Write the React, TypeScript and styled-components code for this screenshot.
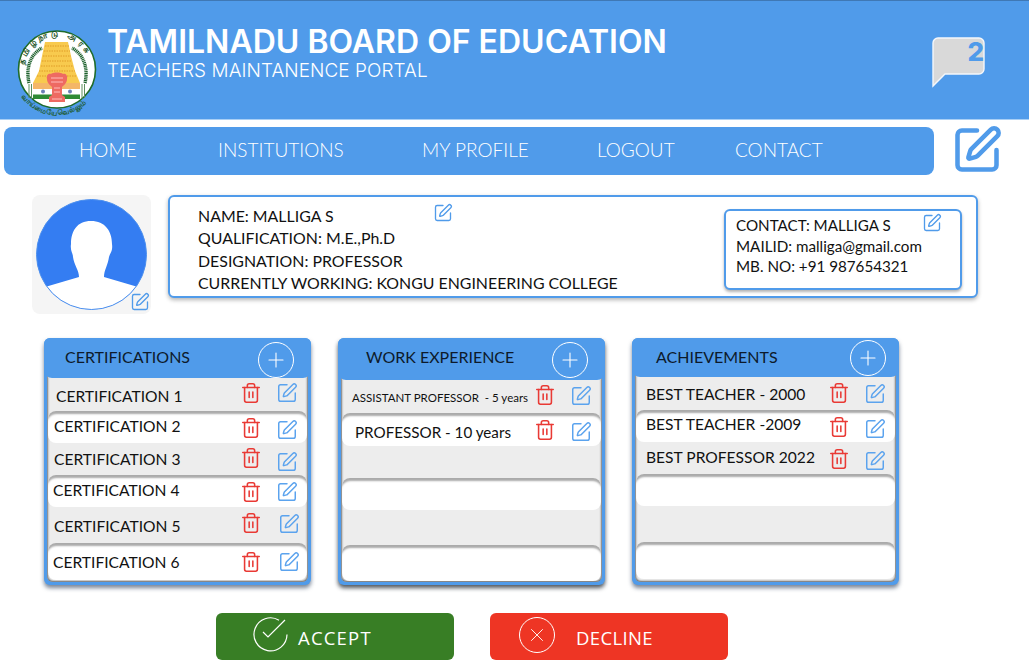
import React from "react";
import styled, { createGlobalStyle } from "styled-components";
import { Plus, SquarePen, Trash2, X } from "lucide-react";

const BLUE = "#509bea";
const DISPLAY = `"Lato", "Noto Sans", sans-serif`;

const Global = createGlobalStyle`
  html, body { margin: 0; padding: 0; background: #fff; }
  body { font-family: ${DISPLAY}; color: #111; overflow: hidden; }
`;
const Page = styled.div`
  width: 1029px; height: 671px; display: flex; flex-direction: column; overflow: hidden;
`;
const Header = styled.header`
  height: 120px; box-sizing: border-box; flex: none; background: ${BLUE};
  border-top: 1px solid #3f78b5; border-bottom: 1px solid #a9cff5;
  display: flex; align-items: flex-start; padding: 0 43px 0 15px;
`;
const LogoBox = styled.div` width: 84px; height: 92px; margin-top: 27px; flex: none; `;
const Titles = styled.div` margin-left: 9px; margin-top: 22px; color: #fff; font-family: Inter, sans-serif; flex: 1; `;
const Title = styled.h1`
  margin: 0 0 0 -1px; font-size: 32px; line-height: 38px; font-weight: 600; white-space: nowrap;
`;
const Subtitle = styled.p`
  margin: 0 0 0 -1px; font-size: 18.9px; line-height: 20px; font-weight: 300; letter-spacing: 0.1px; white-space: nowrap;
`;
const Bubble = styled.div` position: relative; width: 54px; height: 51px; margin-top: 36px; flex: none; `;
const BubbleCount = styled.span`
  position: absolute; right: 2px; top: 0; font: 800 26px/30px Inter, sans-serif; color: ${BLUE};
`;
const NavRow = styled.div` display: flex; align-items: flex-start; height: 48px; flex: none; margin: 7px 0 0 4px; `;
const Nav = styled.nav`
  width: 930px; height: 48px; border-radius: 8px; background: ${BLUE}; box-sizing: border-box; padding: 0 0 3px 75px;
  display: grid; grid-template-columns: 139px 204px 175px 138px 120px; align-items: center;
`;
const NavItem = styled.a` color: #fff; font-size: 19px; font-weight: 300; white-space: nowrap; `;
const BigEdit = styled(SquarePen)` margin: -3px 0 0 17px; color: ${BLUE}; flex: none; `;
const ProfileRow = styled.section` display: flex; align-items: flex-start; margin: 20px 0 0 32px; `;
const AvatarBox = styled.div`
  position: relative; width: 119px; height: 119px; background: #f5f5f5; border-radius: 8px; flex: none;
  display: flex; align-items: center; justify-content: center;
`;
const Corner = styled(SquarePen)<{ $r: number; $t: number }>`
  position: absolute; right: ${(p) => p.$r}px; top: ${(p) => p.$t}px; color: ${BLUE};
`;
const InfoCard = styled.div`
  position: relative; margin-left: 17px; width: 810px; height: 103px; box-sizing: border-box;
  border: 2px solid ${BLUE}; border-radius: 6px; background: #fff; box-shadow: 0 2px 4px rgba(0,0,0,.3);
  display: flex; align-items: flex-start; padding: 8px 14px 0 28px;
`;
const InfoText = styled.div` font-size: 15.9px; line-height: 22.4px; white-space: nowrap; flex: 1; `;
const ContactCard = styled.div`
  position: relative; width: 238px; height: 81px; box-sizing: border-box; margin-top: 4px;
  border: 2px solid ${BLUE}; border-radius: 6px; background: #fff; box-shadow: 0 2px 3px rgba(0,0,0,.3);
  padding: 4px 0 0 10px; font-size: 15.2px; line-height: 20.5px; white-space: nowrap;
`;
const Panels = styled.section` display: flex; gap: 27.5px; margin: 24px 0 0 44px; `;
const Panel = styled.div<{ $dark?: boolean }>`
  width: 266.5px; height: 247px; box-sizing: border-box; background: ${BLUE}; border-radius: 6px;
  box-shadow: 0 3px 4px ${(p) => (p.$dark ? "rgba(20,30,40,.75)" : "rgba(30,50,80,.6)")};
  display: flex; flex-direction: column; padding: 0 3px 3px; overflow: hidden;
`;
const PanelHead = styled.div<{ $h: number; $pl: number; $gap: number }>`
  height: ${(p) => p.$h}px; flex: none; margin: 0 -3px; background: ${BLUE}; display: flex; align-items: flex-start;
  padding: ${(p) => p.$gap}px 0 0 ${(p) => p.$pl}px; box-sizing: border-box; position: relative; z-index: 1;
  border-radius: 0 0 8px 8px; font-size: 16px; line-height: 28px; white-space: nowrap;
`;
const PanelName = styled.span` flex: 1; color: #0d1a2b; `;
const AddCircle = styled.span<{ $mr: number; $mt: number }>`
  width: 34px; height: 34px; border: 1px solid #fff; border-radius: 50%; display: flex; align-items: center;
  justify-content: center; margin: ${(p) => p.$mt}px ${(p) => p.$mr}px 0 0; color: #fff; flex: none;
`;
const PanelBody = styled.div`
  flex: 1; background: linear-gradient(#fff 8px, #ededed 8px); border-radius: 0 0 6px 6px; overflow: hidden;
  margin-top: -8px; padding-top: 8px;
  box-shadow: inset 2px 0 2px -1px #777, inset -2px 0 2px -1px #777, inset 0 -2px 2px -1px #666;
`;
const Row = styled.div<{ $h: number; $white?: boolean; $pl: number }>`
  height: ${(p) => p.$h}px; box-sizing: border-box; display: flex; align-items: center; padding: 0 10px 0 ${(p) => p.$pl}px;
  white-space: nowrap;
  ${(p) => p.$white ? `background: #fff; border-radius: 8px; margin: 0 1px; padding-right: 9px; box-shadow: inset 0 4px 2px -1px #aaa;` : ""}
`;
const RowText = styled.span<{ $s?: number; $dy?: number }>`
  flex: 1; font-size: ${(p) => p.$s ?? 15.6}px; margin-top: ${(p) => p.$dy ?? 0}px;
`;
const Small = styled.span` font-size: 11.5px; `;
const Trash = styled(Trash2)<{ $dy: number }>`
  color: #e93a35; flex: none; margin-top: ${(p) => p.$dy}px;
`;
const RowEdit = styled(SquarePen)<{ $dy: number; $shift: number }>`
  color: #5ba3ee; flex: none; margin: ${(p) => p.$dy}px ${(p) => -p.$shift}px 0 ${(p) => 14 + p.$shift}px;
`;
const Actions = styled.section` display: flex; gap: 36px; margin: 28px 0 0 216px; `;
const ActionBtn = styled.button<{ $bg: string; $pl: number; $gap: number }>`
  width: 238px; height: 47px; border: 0; border-radius: 6px; background: ${(p) => p.$bg}; color: #fff; display: flex;
  align-items: center; padding: 0 0 0 ${(p) => p.$pl}px; gap: ${(p) => p.$gap}px; font: 400 18.5px "Open Sans", sans-serif;
`;
const RingIcon = styled.svg` flex: none; margin-top: -4px; `;
const BtnLabel = styled.span<{ $ls: number }>` margin-top: 2px; letter-spacing: ${(p) => p.$ls}px; `;
const Ring = styled.span`
  width: 34px; height: 34px; border: 1.2px solid #fff; border-radius: 50%; display: flex;
  align-items: center; justify-content: center; flex: none; margin-top: -4px;
`;

const Logo = () => (
  <svg width="84" height="92" viewBox="0 0 84 92" aria-hidden="true">
    <defs>
      <path id="topArc" d="M8.5 42 A33.5 33.5 0 0 1 75.5 42" />
      <path id="botArc" d="M5 66 A43 43 0 0 0 79 66" />
    </defs>
    <circle cx="42" cy="41.5" r="38.5" fill="#fff" stroke="#1f6b2a" strokeWidth="1.6" />
    <text fontSize="8" fill="#174f22" fontWeight="700" fontFamily="'Noto Sans', sans-serif" letterSpacing="3.4">
      <textPath href="#topArc" startOffset="5">தமிழ்நாடு அரசு</textPath>
    </text>
    <g fill="none" stroke="#1b5f2a" strokeWidth="3.4" strokeDasharray="1.2 .6">
      <path d="M14 55 C11 42 14 27 27 20" />
      <path d="M70 55 C73 42 70 27 57 20" />
    </g>
    <path d="M18 55 L24 43 L27 28 L30 14 L53 14 L56 28 L60 43 L65 55 Z" fill="#f8ca4e" />
    <path d="M30 18 H54 M29 23 H55 M28 28 H56 M27 33 H57 M26 38 H58 M24 43 H60 M22 48 H62" stroke="#e09c27" strokeWidth="1" strokeDasharray="1.5 1" />
    <rect x="18" y="55" width="47" height="6" fill="#f4b668" />
    <rect x="18" y="61" width="47" height="5.5" fill="#fff" />
    <rect x="18" y="66.5" width="47" height="4.5" fill="#2f8a34" />
    <path d="M14 56 V70 M16.5 56 V71 M67 56 V71 M69.5 56 V70" stroke="#5c8f5e" strokeWidth="1" />
    <circle cx="28" cy="63.5" r="2" fill="#6b7fb5" />
    <circle cx="55" cy="63.5" r="2" fill="#6b7fb5" />
    <path d="M32 51 C31 47 34 45 36 46 C38 44 46 44 48 46 C50 45 53 47 52 51 C52 55 49 57 47 59 L47 67 L50 69 L50 74 L34 74 L34 69 L37 67 L37 59 C35 57 32 55 32 51 Z" fill="#ee6a62" />
    <path d="M36 50 H48 M36 54 H48 M39 60 H45 M39 64 H45 M37 71 H47" stroke="#fbb" strokeWidth="1" />
    <text fontSize="7" fill="#1d5a2a" fontWeight="700" fontFamily="'Noto Sans', sans-serif">
      <textPath href="#botArc" startOffset="3">வாய்மையே வெல்லும்</textPath>
    </text>
  </svg>
);

const ChatBubble = () => (
  <svg width="54" height="51" viewBox="0 0 54 51" aria-hidden="true">
    <path d="M6 1 H47 A5 5 0 0 1 52 6 V32 A5 5 0 0 1 47 37 H13 L1 49 V6 A5 5 0 0 1 6 1 Z" fill="#d9d9d9" stroke="#f4f7fb" strokeWidth="1.4" />
  </svg>
);

const Avatar = () => (
  <svg width="111" height="111" viewBox="0 0 111 111" aria-hidden="true">
    <defs><clipPath id="ava"><circle cx="55.5" cy="55.5" r="55" /></clipPath></defs>
    <circle cx="55.5" cy="55.5" r="55" fill="#347df2" />
    <path clipPath="url(#ava)" fill="#fff" d="M55 22 C41 22 35 32 35 45 C34 52 37 54 37 58 C38 66 43 71 43 78 L9 88 L9 112 L102 112 L102 88 L68 78 C68 71 72 66 73 58 C74 54 77 52 76 45 C76 32 69 22 55 22 Z" />
    <circle cx="55.5" cy="55.5" r="55" fill="none" stroke="#4d90ee" strokeWidth="1" />
  </svg>
);

type RowData = { text?: React.ReactNode; h: number; white?: boolean; pl?: number; s?: number; dy?: number; t?: number; e?: number; shift?: number };

const certs: RowData[] = [
  { text: "CERTIFICATION 1", h: 33, pl: 9, dy: 2, t: -4, e: -4 },
  { text: "CERTIFICATION 2", h: 32, white: true, pl: 6, dy: -2, t: 1, e: 5 },
  { text: "CERTIFICATION 3", h: 32, pl: 7, dy: -1, t: -2, e: 5 },
  { text: "CERTIFICATION 4", h: 32, white: true, pl: 5, dy: -2, t: 1, e: 1 },
  { text: "CERTIFICATION 5", h: 36, pl: 7, dy: 2, t: -4, e: -3, shift: 2 },
  { text: "CERTIFICATION 6", h: 37, white: true, pl: 5, t: 1, e: 1, shift: 2 },
];
const work: RowData[] = [
  { text: <Small>ASSISTANT PROFESSOR &nbsp;- 5 years</Small>, h: 33, pl: 11, dy: -1, t: -3, e: -1 },
  { text: "PROFESSOR - 10 years", s: 15.2, h: 33, white: true, pl: 13, dy: 4, t: 1, e: 4 },
  { h: 32 },
  { h: 32, white: true },
  { h: 35 },
  { h: 36, white: true },
];
const achievements: RowData[] = [
  { text: "BEST TEACHER - 2000", h: 33, pl: 11, dy: 0, t: -2, e: 0 },
  { text: "BEST TEACHER -2009", h: 32, white: true, pl: 10, dy: -5, t: 1, e: 6 },
  { text: "BEST PROFESSOR 2022", h: 32, pl: 11, dy: -3, t: 1, e: 6 },
  { h: 32, white: true },
  { h: 36 },
  { h: 37, white: true },
];

const ListPanel = ({ name, h, pl, gap, mr, mt, rows, dark }: { name: string; h: number; pl: number; gap: number; mr: number; mt: number; rows: RowData[]; dark?: boolean }) => (
  <Panel $dark={dark}>
    <PanelHead $h={h} $pl={pl} $gap={gap}>
      <PanelName>{name}</PanelName>
      <AddCircle $mr={mr} $mt={mt}><Plus size={24} strokeWidth={1.1} /></AddCircle>
    </PanelHead>
    <PanelBody>
      {rows.map((r, i) => (
        <Row key={i} $h={r.h} $white={r.white} $pl={r.pl ?? 0}>
          {r.text && <RowText $dy={r.dy} $s={r.s}>{r.text}</RowText>}
          {r.text && <Trash size={22} strokeWidth={1.7} $dy={r.t ?? 0} />}
          {r.text && <RowEdit size={22} strokeWidth={1.6} $dy={r.e ?? 0} $shift={r.shift ?? 0} />}
        </Row>
      ))}
    </PanelBody>
  </Panel>
);

export default function App() {
  return (
    <Page>
      <Global />
      <Header>
        <LogoBox><Logo /></LogoBox>
        <Titles>
          <Title>TAMILNADU BOARD OF EDUCATION</Title>
          <Subtitle>TEACHERS MAINTANENCE PORTAL</Subtitle>
        </Titles>
        <Bubble><ChatBubble /><BubbleCount>2</BubbleCount></Bubble>
      </Header>
      <NavRow>
        <Nav>
          <NavItem>HOME</NavItem>
          <NavItem>INSTITUTIONS</NavItem>
          <NavItem>MY PROFILE</NavItem>
          <NavItem>LOGOUT</NavItem>
          <NavItem>CONTACT</NavItem>
        </Nav>
        <BigEdit size={52} strokeWidth={2.1} />
      </NavRow>
      <ProfileRow>
        <AvatarBox>
          <Avatar />
          <Corner size={20} strokeWidth={1.6} $r={1} $t={97} />
        </AvatarBox>
        <InfoCard>
          <InfoText>
            NAME: MALLIGA S<br />
            QUALIFICATION: M.E.,Ph.D<br />
            DESIGNATION: PROFESSOR<br />
            CURRENTLY WORKING: KONGU ENGINEERING COLLEGE
          </InfoText>
          <Corner size={20} strokeWidth={1.6} $r={523} $t={6} />
          <ContactCard>
            CONTACT: MALLIGA S<br />
            MAILID: malliga@gmail.com<br />
            MB. NO: +91 987654321
            <Corner size={20} strokeWidth={1.6} $r={18} $t={2} />
          </ContactCard>
        </InfoCard>
      </ProfileRow>
      <Panels>
        <ListPanel name="CERTIFICATIONS" h={40} pl={21} gap={5} mr={17} mt={-1} rows={certs} />
        <ListPanel name="WORK EXPERIENCE" h={42} pl={28} gap={5} mr={17} mt={-1} rows={work} dark />
        <ListPanel name="ACHIEVEMENTS" h={39} pl={24} gap={5} mr={13} mt={-3} rows={achievements} />
      </Panels>
      <Actions>
        <ActionBtn $bg="#387e25" $pl={37} $gap={9}>
          <RingIcon width="36" height="36" viewBox="0 0 36 36" fill="none" stroke="#fff" strokeWidth="1.2">
            <path d="M26 3.2 A16.5 16.5 0 1 0 34 17.5" />
            <path d="M10 15 L15 20 L32 3" />
          </RingIcon>
          <BtnLabel $ls={1.2}>ACCEPT</BtnLabel>
        </ActionBtn>
        <ActionBtn $bg="#ee3524" $pl={29} $gap={21}>
          <Ring><X size={22} strokeWidth={1} /></Ring>
          <BtnLabel $ls={0.35}>DECLINE</BtnLabel>
        </ActionBtn>
      </Actions>
    </Page>
  );
}
